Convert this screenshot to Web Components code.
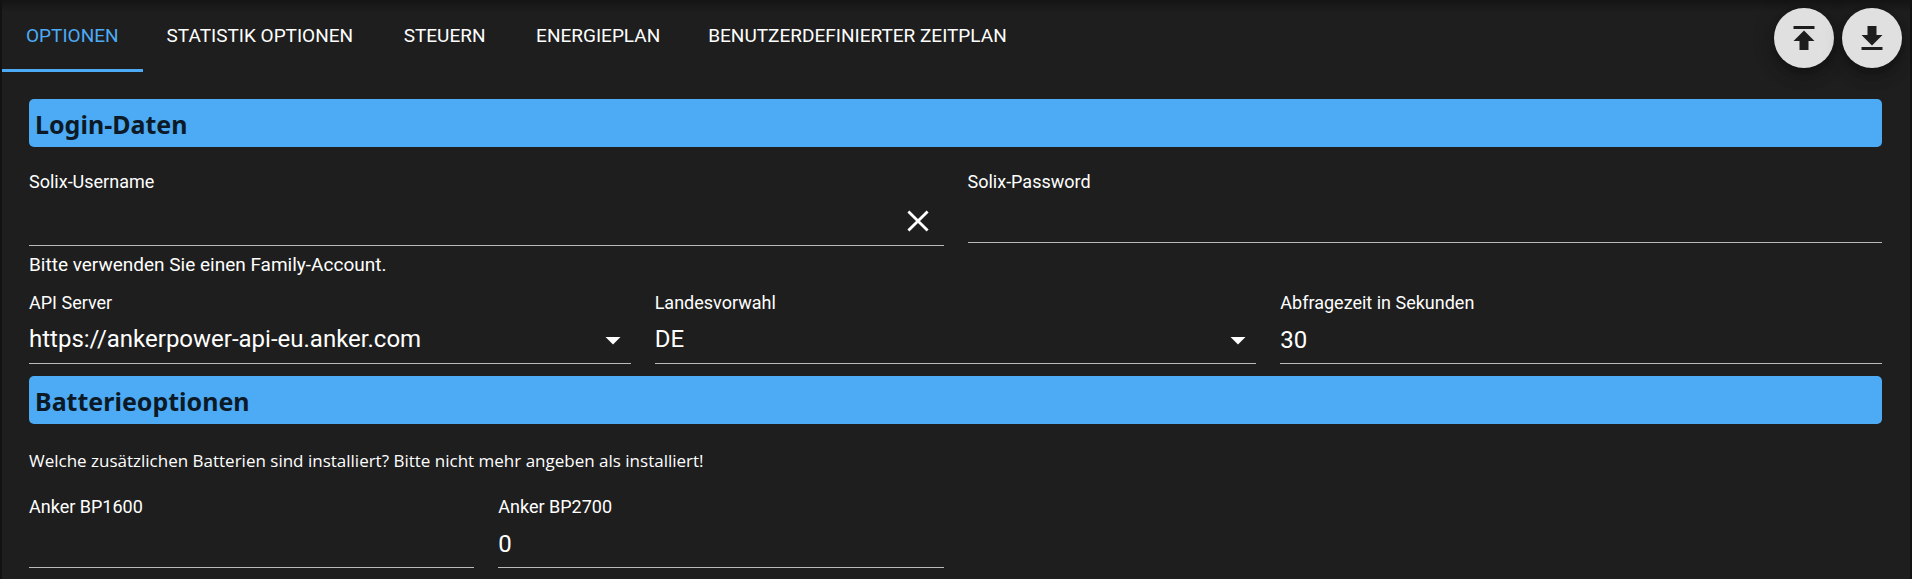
<!DOCTYPE html>
<html lang="de">
<head>
<meta charset="utf-8">
<title>Solix Konfiguration</title>
<style>
  body {
    margin: 0;
    background: #121212;
    color: #fff;
    font-family: Roboto, sans-serif;
    --accent: #4dabf5;
    --surface: #1e1e1e;
    --line: #bbb;
  }
</style>
</head>
<body>
<config-panel>
  <tab-bar slot="tabs">
    <tab-item active>OPTIONEN</tab-item>
    <tab-item>STATISTIK OPTIONEN</tab-item>
    <tab-item>STEUERN</tab-item>
    <tab-item>ENERGIEPLAN</tab-item>
    <tab-item>BENUTZERDEFINIERTER ZEITPLAN</tab-item>
  </tab-bar>
  <round-button slot="actions" icon="upload" label="Importieren"></round-button>
  <round-button slot="actions" icon="download" label="Exportieren"></round-button>

  <section-title>Login-Daten</section-title>
  <form-row columns="2" style="--above: 23px; --below: 14px">
    <text-field label="Solix-Username" clearable hint="Bitte verwenden Sie einen Family-Account."></text-field>
    <text-field label="Solix-Password" type="password"></text-field>
  </form-row>
  <form-row columns="3" style="--below: 12px">
    <select-field label="API Server" value="https://ankerpower-api-eu.anker.com"></select-field>
    <select-field label="Landesvorwahl" value="DE"></select-field>
    <text-field label="Abfragezeit in Sekunden" type="number" value="30"></text-field>
  </form-row>

  <section-title>Batterieoptionen</section-title>
  <info-text>Welche zusätzlichen Batterien sind installiert? Bitte nicht mehr angeben als installiert!</info-text>
  <form-row columns="4">
    <text-field label="Anker BP1600" type="number"></text-field>
    <text-field label="Anker BP2700" type="number" value="0"></text-field>
  </form-row>
</config-panel>

<script>
const fieldStyles = `
  :host { display: block; min-width: 0; }
  label { display: block; font-size: 18px; line-height: 24px; }
  .control { display: grid; box-sizing: border-box; height: 49px; padding-top: 2px; border-bottom: 1px solid var(--line); }
  input, select {
    grid-area: 1 / 1;
    box-sizing: border-box;
    width: 100%;
    min-width: 0;
    margin: 0;
    padding: 0;
    border: 0;
    outline: 0;
    border-radius: 0;
    appearance: none;
    background: transparent;
    color: inherit;
    font: 24px Roboto, sans-serif;
  }
  input[type=number] { appearance: textfield; }
  input::-webkit-inner-spin-button { appearance: none; margin: 0; }
`;

class BaseElement extends HTMLElement {
  connectedCallback() {
    if (this.shadowRoot) return;
    this.attachShadow({ mode: "open" }).innerHTML = this.render();
    this.ready();
  }
  attr(name) { return this.getAttribute(name) || ""; }
  ready() {}
}

customElements.define("config-panel", class extends BaseElement {
  render() {
    return `<style>
      :host {
        display: block;
        box-sizing: border-box;
        min-height: 100vh;
        margin: 0 2px;
        background: linear-gradient(#141414, #1e1e1e 12px) var(--surface);
      }
      header { display: flex; align-items: flex-start; justify-content: space-between; padding-right: 8px; }
      .actions { display: flex; gap: 8px; padding-top: 8px; }
      main { padding: 27px 28px 0 27px; }
    </style>
    <header><slot name="tabs"></slot><div class="actions"><slot name="actions"></slot></div></header>
    <main><slot></slot></main>`;
  }
});

customElements.define("tab-bar", class extends BaseElement {
  render() {
    return `<style>:host { display: block; } nav { display: flex; }</style><nav><slot></slot></nav>`;
  }
});

customElements.define("tab-item", class extends BaseElement {
  render() {
    return `<style>
      :host { display: block; }
      button {
        height: 72px;
        min-width: 135px;
        padding: 1px 24px 0;
        border: 0;
        border-bottom: 3px solid transparent;
        background: none;
        color: #fff;
        font: 19px Roboto, sans-serif;
        white-space: nowrap;
      }
      :host([active]) button { color: var(--accent); border-bottom-color: var(--accent); }
    </style>
    <button type="button"><slot></slot></button>`;
  }
});

customElements.define("round-button", class extends BaseElement {
  render() {
    const paths = {
      upload: "M5 4v2h14V4H5zm0 10h4v6h6v-6h4l-7-7-7 7z",
      download: "M5 20h14v-2H5v2zM19 10h-4V4H9v6H5l7 7 7-7z"
    };
    return `<style>
      :host { display: block; }
      button {
        display: grid;
        place-items: center;
        width: 60px;
        height: 60px;
        padding: 0;
        border: 0;
        border-radius: 50%;
        background: #e0e0e0;
        color: #1e1e1e;
        box-shadow: 0 5px 8px rgba(0,0,0,.2), 0 9px 15px rgba(0,0,0,.14), 0 2px 27px rgba(0,0,0,.12);
      }
      svg { width: 36px; height: 36px; fill: currentColor; }
    </style>
    <button type="button" aria-label="${this.attr("label")}">
      <svg viewBox="0 0 24 24" aria-hidden="true"><path d="${paths[this.attr("icon")]}"/></svg>
    </button>`;
  }
});

customElements.define("section-title", class extends BaseElement {
  render() {
    return `<style>
      :host { display: block; }
      h2 {
        margin: 0;
        padding: 2px 6px 0;
        border-radius: 5px;
        background: var(--accent);
        color: #0b1a26;
        font: 700 25px/46px "Noto Sans", sans-serif;
      }
    </style><h2><slot></slot></h2>`;
  }
});

customElements.define("info-text", class extends BaseElement {
  render() {
    return `<style>
      :host { display: block; margin: 25px 0 22px; }
      p { margin: 0; font: 17px/24px "Open Sans", sans-serif; }
    </style><p><slot></slot></p>`;
  }
});

customElements.define("form-row", class extends BaseElement {
  render() {
    return `<style>
      :host {
        display: grid;
        grid-template-columns: repeat(${this.attr("columns")}, minmax(0, 1fr));
        align-items: start;
        gap: 24px;
        padding: var(--above, 0) 0 var(--below, 0);
      }
    </style><slot></slot>`;
  }
});

customElements.define("text-field", class extends BaseElement {
  render() {
    const clear = this.hasAttribute("clearable")
      ? `<button type="button" aria-label="Löschen"><svg viewBox="0 0 24 24" aria-hidden="true"><path d="M5.6 5.6l12.8 12.8M18.4 5.6L5.6 18.4"/></svg></button>` : "";
    const hint = this.attr("hint") ? `<p id="hint">${this.attr("hint")}</p>` : "";
    return `<style>
      ${fieldStyles}
      :host([clearable]) .control { grid-template-columns: 1fr 52px; height: 52px; }
      button { padding: 0; border: 0; background: none; color: inherit; display: grid; place-items: center; }
      svg { width: 36px; height: 36px; fill: none; stroke: currentColor; stroke-width: 1.9; }
      p { margin: 7px 0 0; font-size: 19px; line-height: 24px; }
    </style>
    <label for="input">${this.attr("label")}</label>
    <div class="control"><input id="input" type="${this.attr("type") || "text"}" value="${this.attr("value")}"${hint && ' aria-describedby="hint"'}>${clear}</div>
    ${hint}`;
  }
  ready() {
    const button = this.shadowRoot.querySelector("button");
    if (button) button.onclick = () => { this.shadowRoot.querySelector("input").value = ""; };
  }
});

customElements.define("select-field", class extends BaseElement {
  render() {
    return `<style>
      ${fieldStyles}
      select { padding-right: 36px; padding-bottom: 2px; }
      svg { grid-area: 1 / 1; place-self: center end; width: 36px; height: 36px; fill: currentColor; pointer-events: none; }
    </style>
    <label for="select">${this.attr("label")}</label>
    <div class="control">
      <select id="select"><option>${this.attr("value")}</option></select>
      <svg viewBox="0 0 24 24" aria-hidden="true"><path d="M7 10l5 5 5-5z"/></svg>
    </div>`;
  }
});
</script>
</body>
</html>
